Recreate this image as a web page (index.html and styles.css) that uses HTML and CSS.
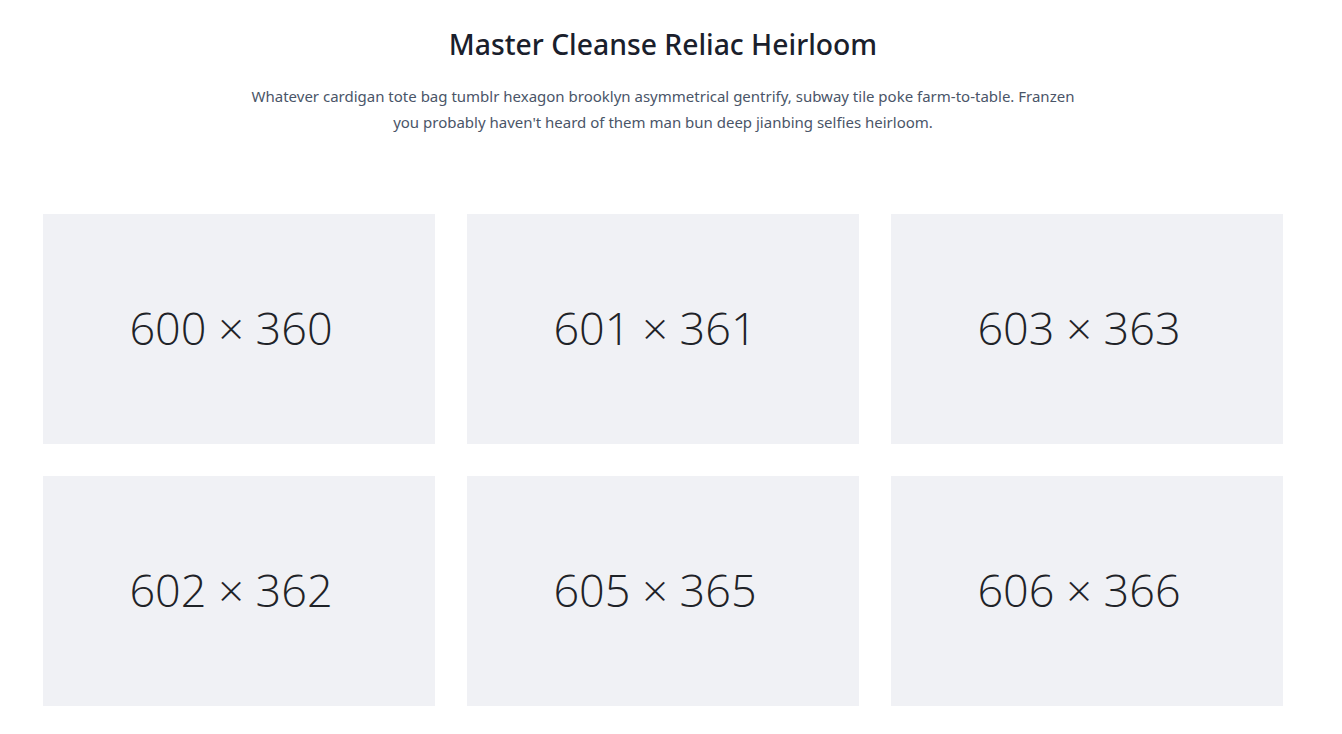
FILE: index.html
```html
<!DOCTYPE html>
<html>
<head>
<meta charset="utf-8">
<link rel="stylesheet" href="styles.css">
</head>
<body>
<section class="gallery">
  <header class="intro">
    <h1 class="title">Master Cleanse Reliac Heirloom</h1>
    <p class="lead">Whatever cardigan tote bag tumblr hexagon brooklyn asymmetrical gentrify, subway tile poke farm-to-table. Franzen you probably haven't heard of them man bun deep jianbing selfies heirloom.</p>
  </header>
  <div class="grid">
    <div class="tile"><span>600 × 360</span></div>
    <div class="tile"><span>601 × 361</span></div>
    <div class="tile"><span>603 × 363</span></div>
    <div class="tile"><span>602 × 362</span></div>
    <div class="tile"><span>605 × 365</span></div>
    <div class="tile"><span>606 × 366</span></div>
  </div>
</section>
</body>
</html>
```
FILE: styles.css
```css
html, body {
  margin: 0;
  padding: 0;
  background: #ffffff;
}
body {
  padding-right: 16px;
  font-family: "Noto Sans", "Open Sans", sans-serif;
}
.gallery {
  max-width: 1240px;
  margin: 0 auto;
  padding-top: 26px;
}
.intro {
  display: flex;
  flex-direction: column;
  align-items: center;
  text-align: center;
  margin-bottom: 79px;
}
.title {
  margin: 0 0 21px;
  font-size: 28.3px;
  line-height: 36px;
  font-weight: 500;
  color: #1a202c;
}
.lead {
  margin: 0;
  width: 827px;
  font-size: 15px;
  line-height: 26px;
  color: #4a5568;
}
.grid {
  display: grid;
  grid-template-columns: repeat(3, 1fr);
  gap: 32px;
}
.tile {
  height: 230px;
  box-sizing: border-box;
  padding-right: 16px;
  padding-bottom: 4px;
  background: #f0f1f5;
  display: flex;
  align-items: center;
  justify-content: center;
}
.tile span {
  font-family: "Open Sans", sans-serif;
  font-weight: 300;
  font-size: 45px;
  color: #1f2328;
}
```
